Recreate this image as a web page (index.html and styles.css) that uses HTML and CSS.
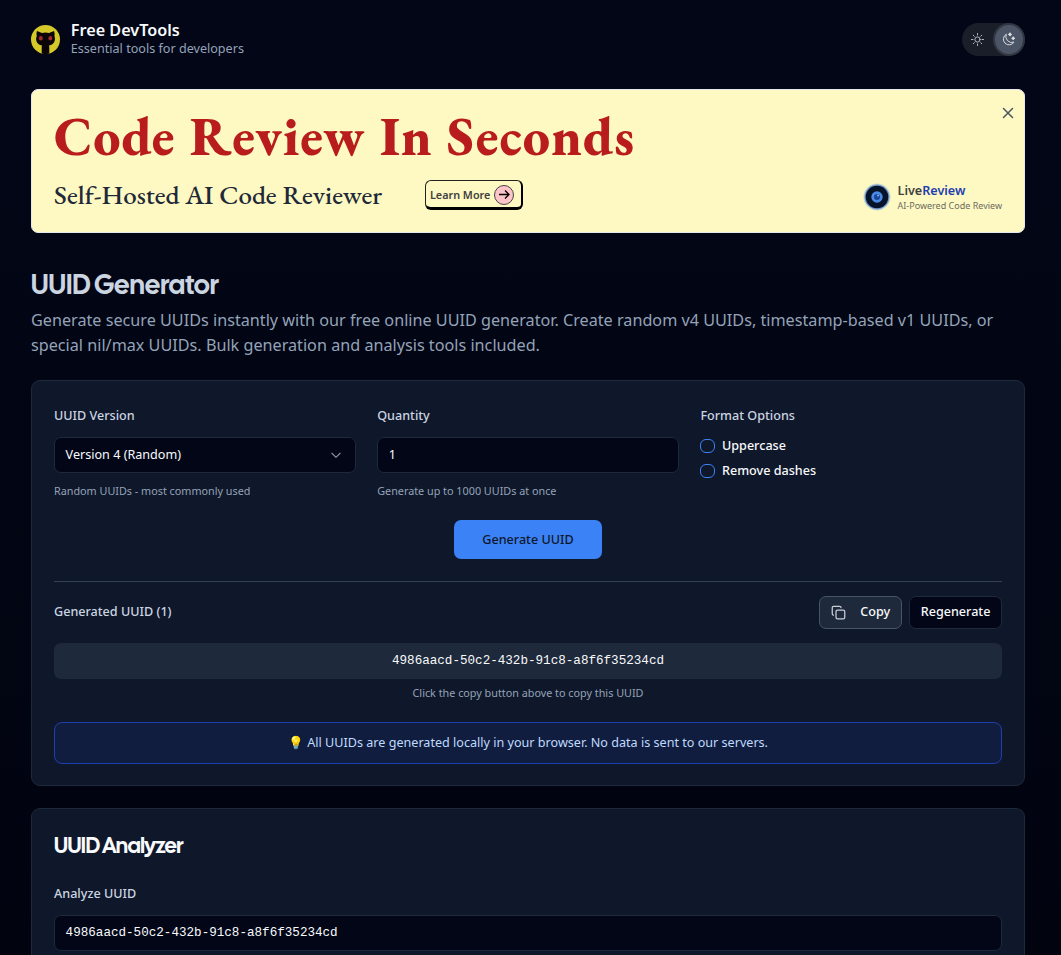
FILE: index.html
```html
<!DOCTYPE html>
<html lang="en">
<head>
<meta charset="utf-8">
<title>UUID Generator - Free DevTools</title>
<link rel="stylesheet" href="styles.css">
</head>
<body>
<div class="page">
  <header class="header">
    <div class="brand">
      <svg class="logo" viewBox="0 0 29 29"><circle cx="14.500" cy="14.500" r="14.500" fill="#d5c92a"/><path d="M6 6l5 2q3.500-.8 7 0l5-2q1 2.800.4 4.900 1 2.400.2 5-1.200 3.600-5.600 4.500.3 1 .3 2.500v5.600q-3.800 1.200-7.600 0v-5.600q0-1.500.3-2.500-4.400-.9-5.600-4.500-.8-2.600.4-5-.7-2.100.2-4.900z" fill="#0b0508"/><ellipse cx="9.800" cy="13.300" rx="1.900" ry="2.200" fill="#a32a30"/><ellipse cx="19.300" cy="13.300" rx="1.900" ry="2.200" fill="#a32a30"/></svg>
      <div>
        <div class="brand-name">Free DevTools</div>
        <div class="brand-tag">Essential tools for developers</div>
      </div>
    </div>
    <div class="theme-toggle">
      <span class="theme-option"><svg width="15" height="15" viewBox="0 0 15 15" fill="none" stroke="#c3c8d0" stroke-width=".9" stroke-linecap="round"><circle cx="7.500" cy="7.500" r="2.600"/><path d="M7.500 1.500v1.500M7.500 12v1.500M1.500 7.500h1.500M12 7.500h1.500M3.200 3.200l1.100 1.100M10.700 10.700l1.100 1.100M3.200 11.800l1.100-1.100M10.700 4.300l1.100-1.100"/></svg></span>
      <span class="theme-option theme-active"><svg width="15" height="15" viewBox="0 0 15 15" fill="none" stroke="#e2e6eb" stroke-width=".9" stroke-linejoin="round"><path d="M5.300 2.200a5.700 5.700 0 1 0 7.700 7.900A6 6 0 0 1 5.300 2.200z"/><path d="M9 .7l.5 1.200 1.200.5-1.200.5L9 4.100l-.5-1.200-1.200-.5 1.200-.5zM12.200 4.700l.5 1.100 1.100.5-1.100.5-.5 1.100-.5-1.100-1.100-.5 1.100-.5z" fill="#e2e6eb" stroke-width=".9"/></svg></span>
    </div>
  </header>

  <section class="banner">
    <div class="banner-copy">
      <div class="banner-title">Code Review In Seconds</div>
      <div class="banner-row">
        <span class="banner-sub">Self-Hosted AI Code Reviewer</span>
        <a class="learn"><span class="learn-text">Learn More</span>
          <svg width="20" height="20" viewBox="0 0 20 20" fill="none"><circle cx="10" cy="10" r="9.500" fill="#fcc5c9" stroke="#444"/><path d="M5 9.500h10M11 5.500l4 4-4 4" stroke="#000" stroke-width="1.300"/></svg></a>
      </div>
    </div>
    <div class="banner-side">
      <svg class="close" width="12" height="12" viewBox="0 0 12 12" stroke="#4b5563" stroke-width="1.500" stroke-linecap="round"><path d="M1.500 1.500l9 9M10.500 1.500l-9 9"/></svg>
      <div class="sponsor">
        <svg width="28" height="28" viewBox="0 0 28 28"><circle cx="14" cy="14" r="13.600" fill="#8db5dd" opacity=".4"/><circle cx="14" cy="14" r="12.500" fill="#5b8bc8" opacity=".8"/><circle cx="14" cy="14" r="11.300" fill="#07132b"/><circle cx="14" cy="14" r="5.700" fill="#4a8be4"/><circle cx="14" cy="14" r="3" fill="#1b4698"/><circle cx="15" cy="12.500" r="1" fill="#7eb4ff"/></svg>
        <div>
          <div class="sponsor-name">Live<span class="sponsor-accent">Review</span></div>
          <div class="sponsor-tag">AI-Powered Code Review</div>
        </div>
      </div>
    </div>
  </section>

  <h1 class="title">UUID Generator</h1>
  <p class="lead">Generate secure UUIDs instantly with our free online UUID generator. Create random v4 UUIDs, timestamp-based v1 UUIDs, or special nil/max UUIDs. Bulk generation and analysis tools included.</p>

  <section class="card generator">
    <div class="form">
      <div>
        <div class="label">UUID Version</div>
        <div class="field select">Version 4 (Random)
          <svg width="14" height="14" viewBox="0 0 24 24" fill="none" stroke="#8a8d94" stroke-width="2" stroke-linecap="round" stroke-linejoin="round"><path d="M5 9l7 7 7-7"/></svg>
        </div>
        <div class="hint">Random UUIDs - most commonly used</div>
      </div>
      <div>
        <div class="label">Quantity</div>
        <div class="field">1</div>
        <div class="hint">Generate up to 1000 UUIDs at once</div>
      </div>
      <div>
        <div class="label label-options">Format Options</div>
        <div class="option"><span class="checkbox"></span>Uppercase</div>
        <div class="option"><span class="checkbox"></span>Remove dashes</div>
      </div>
    </div>
    <div class="primary">Generate UUID</div>
    <div class="result-head">
      <span class="result-title">Generated UUID (1)</span>
      <div class="actions">
        <span class="button copy"><svg width="15" height="15" viewBox="0 0 24 24" fill="none" stroke="#c9ced6" stroke-width="2" stroke-linecap="round" stroke-linejoin="round"><rect x="8" y="8" width="14" height="14" rx="2.500"/><path d="M4 16a2 2 0 0 1-2-2V4a2 2 0 0 1 2-2h10a2 2 0 0 1 2 2"/></svg>Copy</span>
        <span class="button">Regenerate</span>
      </div>
    </div>
    <div class="uuid">4986aacd-50c2-432b-91c8-a8f6f35234cd</div>
    <div class="copy-hint">Click the copy button above to copy this UUID</div>
    <div class="notice">💡 All UUIDs are generated locally in your browser. No data is sent to our servers.</div>
  </section>

  <section class="card analyzer">
    <h2 class="subtitle">UUID Analyzer</h2>
    <div class="label">Analyze UUID</div>
    <div class="field mono">4986aacd-50c2-432b-91c8-a8f6f35234cd</div>
  </section>
</div>
</body>
</html>
```

FILE: styles.css
```css
* { box-sizing: border-box; }
body {
  margin: 0;
  height: 955px;
  background: linear-gradient(#020617, #01040f);
  color: #f8fafc;
  font-family: "Noto Sans", sans-serif;
  font-size: 12.6px;
  line-height: 18px;
}
svg { display: block; flex: none; }
.page { padding: 0 36px 0 31px; }
.header { height: 89px; padding: 19px 0 32px; display: flex; justify-content: space-between; }
.brand { display: flex; align-items: center; gap: 10.800px; height: 38px; }
.logo { width: 29px; height: 29px; margin-top: 2px; }
.brand-name { font-size: 16.2px; font-weight: 600; line-height: 20px; }
.brand-tag { color: #94a3b8; line-height: 17px; }
.theme-toggle { margin-top: 4px; width: 63px; height: 33px; border-radius: 17px; background: #1a1e29; display: flex; justify-content: space-between; }
.theme-option { width: 32px; height: 33px; display: flex; align-items: center; justify-content: center; }
.theme-active { width: 33px; border-radius: 50%; background: #4b5565; border: 2px solid #323743; }

.banner { height: 144px; border: 1px solid #e5e7eb; border-radius: 7px; background: #fef9c3; display: flex; justify-content: space-between; padding: 0 22px; }
.banner-title { margin-top: 16px; height: 62px; color: #b91c1c; font: 800 54px/61px "EB Garamond", "Liberation Serif", serif; letter-spacing: .96px; white-space: nowrap; }
.banner-row { display: flex; align-items: center; gap: 43px; margin-top: 12px; height: 30px; }
.banner-sub { color: #1f2937; font: 500 27px/30px "EB Garamond", "Liberation Serif", serif; white-space: nowrap; }
.learn { display: flex; align-items: center; gap: 4px; width: 98px; height: 30px; padding-left: 4px; border: 1px solid #222; border-right: 2px solid #000; border-bottom: 3px solid #000; border-radius: 6px; color: #404040; font-size: 10.8px; font-weight: 600; white-space: nowrap; }
.learn-text { padding-top: 2px; }
.learn svg { margin-top: 2px; }
.banner-side { display: flex; flex-direction: column; align-items: flex-end; justify-content: space-between; padding: 17px 0 20px; }
.close { margin-right: -12px; }
.sponsor { display: flex; align-items: center; gap: 7px; height: 31px; }
.sponsor-name { font-size: 12.6px; font-weight: 600; line-height: 16px; color: #404040; padding-top: 2px; }
.sponsor-accent { color: #1e40af; }
.sponsor-tag { font-size: 9px; line-height: 14px; color: #6b6b5f; }

.title { margin: 34px 0 0; height: 36px; font: 600 27px/36px "Cal Sans", Inter, sans-serif; letter-spacing: 0; color: #cbd5e1; }
.lead { margin: 5px 0 22px; font-size: 16.2px; line-height: 25px; color: #94a3b8; }

.card { border: 1px solid #1e293b; border-radius: 9px; background: #0f172a; padding: 22px 22px 21px; }
.form { display: grid; grid-template-columns: repeat(3, 1fr); gap: 21.600px; height: 117px; }
.label { height: 25px; line-height: 25px; margin-bottom: 9px; color: #cbd5e1; font-weight: 500; }
.label-options { margin-bottom: 5px; }
.field { height: 36px; border: 1px solid #1e293b; border-radius: 7px; background: #020617; padding: 0 10.600px; line-height: 34px; }
.select { display: flex; align-items: center; justify-content: space-between; padding-right: 12px; }
.hint { margin-top: 11px; font-size: 10.8px; line-height: 14px; color: #94a3b8; }
.option { display: flex; align-items: center; gap: 6.600px; height: 25px; font-weight: 500; }
.checkbox { width: 15px; height: 14px; border: 1px solid #3b82f6; border-radius: 6px; }
.primary { width: 148px; height: 39px; margin: 0 auto 22px; border-radius: 7px; background: #3b82f6; color: #0f172a; font-weight: 500; line-height: 39px; text-align: center; }
.result-head { display: flex; align-items: center; justify-content: space-between; height: 62px; border-top: 1px solid #334155; padding-bottom: 1px; }
.result-title { color: #cbd5e1; font-weight: 500; }
.actions { display: flex; gap: 7px; }
.button { display: flex; align-items: center; height: 33px; border: 1px solid #1e293b; border-radius: 7px; background: #020617; padding: 0 10.600px; font-weight: 500; }
.copy { gap: 14px; padding: 0 11px; background: #1e293b; border-color: #475569; }
.uuid { height: 36px; border-radius: 7px; background: #1e293b; text-align: center; font: 12.600px/36px "Liberation Mono", monospace; }
.copy-hint { margin-top: 7px; height: 36px; font-size: 10.8px; line-height: 14px; text-align: center; color: #94a3b8; }
.notice { height: 42px; line-height: 40px; border: 1px solid #1e40af; border-radius: 8px; background: #111d3e; color: #bfdbfe; text-align: center; }
.analyzer { margin-top: 22px; height: 147px; padding-bottom: 0; border-bottom: 0; border-radius: 9px 9px 0 0; }
.subtitle { margin: 0 0 22px; height: 28px; font: 600 21.6px/29px "Cal Sans", Inter, sans-serif; letter-spacing: -.54px; }
.mono { font-family: "Liberation Mono", monospace; line-height: 35px; }
```
